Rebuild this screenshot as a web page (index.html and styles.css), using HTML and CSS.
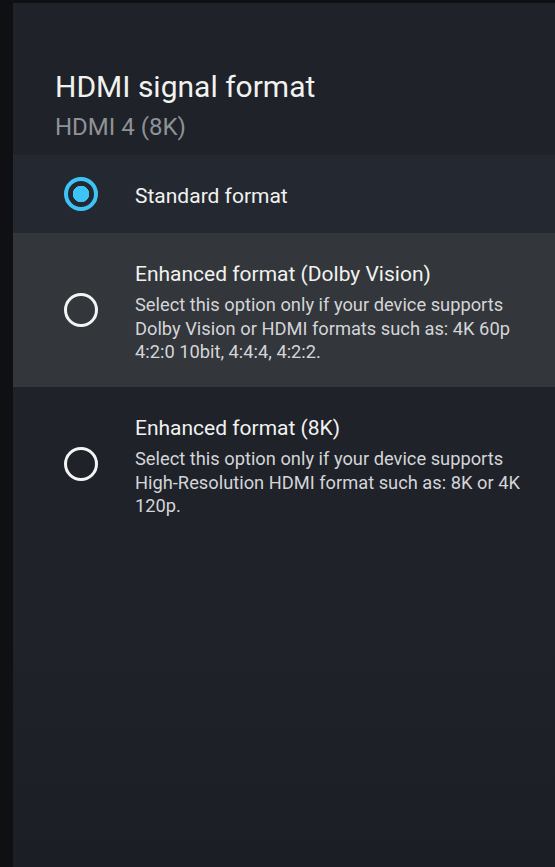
FILE: index.html
```html
<!DOCTYPE html>
<html lang="en">
<head>
  <meta charset="UTF-8">
  <meta name="viewport" content="width=device-width, initial-scale=1.0">
  <title>HDMI signal format</title>
  <link rel="stylesheet" href="styles.css">
</head>
<body>
  <div class="panel">
    <div class="panel-header">
      <h1>HDMI signal format</h1>
      <p class="subtitle">HDMI 4 (8K)</p>
    </div>

    <div class="option-list">
      <div class="option selected">
        <span class="radio"></span>
        <div class="option-text">
          <div class="option-title">Standard format</div>
        </div>
      </div>
      <div class="option focused">
        <span class="radio"></span>
        <div class="option-text">
          <div class="option-title">Enhanced format (Dolby Vision)</div>
          <div class="option-desc">Select this option only if your device supports Dolby Vision or HDMI formats such as: 4K 60p 4:2:0 10bit, 4:4:4, 4:2:2.</div>
        </div>
      </div>
      <div class="option">
        <span class="radio"></span>
        <div class="option-text">
          <div class="option-title">Enhanced format (8K)</div>
          <div class="option-desc">Select this option only if your device supports High-Resolution HDMI format such as: 8K or 4K 120p.</div>
        </div>
      </div>
    </div>
  </div>
</body>
</html>
```

FILE: styles.css
```css
:root {
  --color-edge: #0e1014;
  --color-panel: #1f2229;
  --color-panel-bottom: #1b1e25;
  --color-selected: #242830;
  --color-focus: #33363b;
  --color-accent: #3ec3f7;
  --color-text: #f1f2f0;
  --color-desc: #d3d5d8;
  --color-muted: #8e9297;
  --font-family: Roboto, "Noto Sans", sans-serif;
}
* { box-sizing: border-box; margin: 0; padding: 0; }
html, body { height: 100%; }
body {
  background: var(--color-edge);
  font-family: var(--font-family);
  display: flex;
  padding: 3px 0 0 13px;
}

/* Panel */
.panel {
  flex: 1;
  background: linear-gradient(180deg, var(--color-panel) 0%, var(--color-panel) 70%, var(--color-panel-bottom) 100%);
  display: flex;
  flex-direction: column;
}

/* Header */
.panel-header { padding: 66px 0 0 42px; height: 152px; }
.panel-header h1 {
  font-size: 30px;
  font-weight: 400;
  line-height: 36px;
  color: var(--color-text);
}
.subtitle {
  margin-top: 8px;
  font-size: 24px;
  line-height: 28px;
  color: var(--color-muted);
}

/* Options */
.option {
  display: flex;
  align-items: flex-start;
  padding: 27px 20px 21px 51px;
  gap: 37px;
}
.option.selected {
  background: var(--color-selected);
  height: 78px;
  padding-top: 0;
  padding-bottom: 0;
  align-items: center;
}
.option.focused { background: var(--color-focus); height: 154px; }
.radio {
  flex: none;
  width: 34px;
  height: 34px;
  margin-top: 33px;
  border: 3px solid #f4f4f4;
  border-radius: 50%;
}
.selected .radio {
  margin-top: 0;
  border: 4px solid var(--color-accent);
  background: radial-gradient(circle, var(--color-accent) 0 8px, transparent 8.5px);
}
.option-title {
  font-size: 21px;
  line-height: 28px;
  color: var(--color-text);
}
.selected .option-title { padding-top: 4px; }
.option-desc {
  margin-top: 5px;
  font-size: 18.3px;
  line-height: 23.5px;
  color: var(--color-desc);
}
```
